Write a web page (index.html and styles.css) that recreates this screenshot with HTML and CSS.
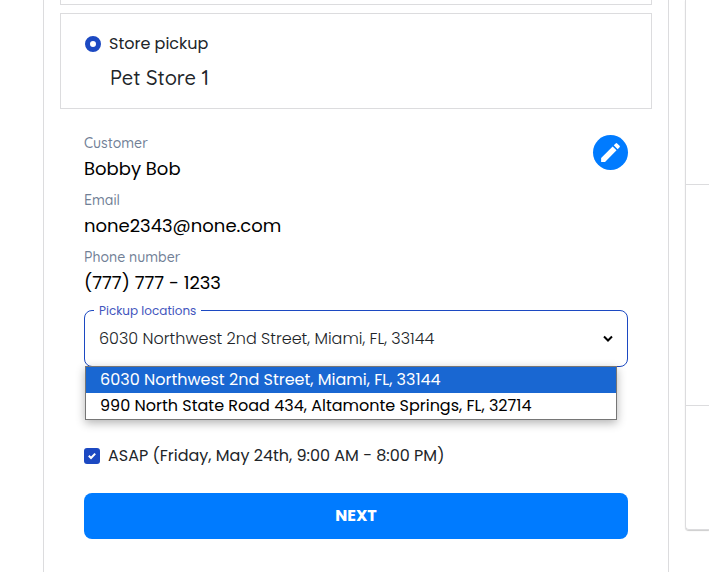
FILE: index.html
```html
<!DOCTYPE html>
<html lang="en">

<head>
    <meta charset="utf-8">
    <meta name="viewport" content="width=device-width, initial-scale=1">
    <title>Checkout</title>
    <link rel="stylesheet" href="styles.css">
</head>

<body>

    <div class="checkout">
        <main class="panel">
            <div class="method method-prev"></div>

            <section class="method">
                <label class="choice">
                    <input class="radio" type="radio" name="method" checked>
                    <span>Store pickup</span>
                </label>
                <p class="store-name">Pet Store 1</p>
            </section>

            <form class="details">
                <div class="customer">
                    <dl class="info">
                        <div class="info-row">
                            <dt>Customer</dt>
                            <dd>Bobby Bob</dd>
                        </div>
                        <div class="info-row">
                            <dt>Email</dt>
                            <dd>none2343@none.com</dd>
                        </div>
                        <div class="info-row">
                            <dt>Phone number</dt>
                            <dd>(777) 777 - 1233</dd>
                        </div>
                    </dl>
                    <button class="edit" type="button" aria-label="Edit">
                        <svg width="25" height="25" viewBox="0 0 24 24" fill="#fff">
                            <path d="M3 17.25V21h3.75L17.81 9.94l-3.75-3.75L3 17.25zM20.71 7.04a1 1 0 0 0 0-1.41l-2.34-2.34a1 1 0 0 0-1.41 0l-1.83 1.83 3.75 3.75 1.83-1.83z"/>
                        </svg>
                    </button>
                </div>

                <div class="field">
                    <label class="field-label" for="location">Pickup locations</label>
                    <select class="select" id="location">
                        <option selected>6030 Northwest 2nd Street, Miami, FL, 33144</option>
                        <option>990 North State Road 434, Altamonte Springs, FL, 32714</option>
                    </select>
                    <svg class="arrow" width="10" height="8" viewBox="0 0 10 8" fill="none" stroke="#000" stroke-width="2">
                        <path d="M1 1.5L5 5.5L9 1.5"/>
                    </svg>
                    <ul class="options" role="listbox">
                        <li class="option active" role="option" aria-selected="true">6030 Northwest 2nd Street, Miami, FL, 33144</li>
                        <li class="option" role="option">990 North State Road 434, Altamonte Springs, FL, 32714</li>
                    </ul>
                </div>

                <label class="choice asap">
                    <span class="check">
                        <input class="checkbox" type="checkbox" checked>
                        <svg class="tick" width="16" height="16" viewBox="0 0 16 16" fill="none" stroke="#fff" stroke-width="2">
                            <path d="M4.8 7.8L7 10L11.2 5.6"/>
                        </svg>
                    </span>
                    <span>ASAP (Friday, May 24th, 9:00 AM - 8:00 PM)</span>
                </label>

                <button class="next" type="submit">NEXT</button>
            </form>
        </main>

        <aside class="summary">
            <div class="summary-top"></div>
            <div class="summary-middle"></div>
            <div class="summary-bottom"></div>
        </aside>
    </div>

</body>

</html>
```

FILE: styles.css
```css
* {
    box-sizing: border-box;
}

body {
    margin: 0;
    background: #fff;
    color: #212529;
    font: 16px/24px Poppins, Inter, sans-serif;
}

.checkout {
    display: grid;
    grid-template-columns: minmax(0, 1fr) 24px;
    gap: 16px;
    min-height: 100vh;
    padding-left: 43px;
}

.panel {
    padding: 0 16px;
    border: solid #dcdcde;
    border-width: 0 1px;
}

.method {
    margin-bottom: 8px;
    padding: 18px 24px 16px;
    border: 1px solid #dcdcde;
}

.method-prev {
    padding: 4px 0 0;
    border-top: 0;
}

.choice {
    display: flex;
    align-items: center;
    gap: 8px;
}

.radio {
    appearance: none;
    width: 16px;
    height: 16px;
    margin: 0;
    border: 5px solid #1c49c2;
    border-radius: 50%;
    background: #fff;
}

.store-name {
    margin: 8px 0 0;
    padding-left: 25px;
    font: 500 20px/28px Quicksand, Lato, sans-serif;
}

.details {
    padding: 15px 24px 32px;
}

.customer {
    display: flex;
    justify-content: space-between;
    align-items: flex-start;
}

.info {
    display: grid;
    gap: 5px;
    margin: 0;
}

.info dt {
    color: #718096;
    font: 500 14px/22px Quicksand, Lato, sans-serif;
}

.info dd {
    margin: 0;
    color: #000;
    font-size: 18px;
    line-height: 30px;
}

.edit {
    display: flex;
    justify-content: center;
    align-items: center;
    width: 35px;
    height: 35px;
    margin-top: 3px;
    padding: 0;
    border: 0;
    border-radius: 50%;
    background: #007bff;
}

.field {
    position: relative;
    margin-top: 12px;
}

.field-label {
    position: absolute;
    top: -7px;
    left: 10px;
    padding: 0 5px;
    background: #fff;
    color: #4255bd;
    font-size: 12px;
    line-height: 16px;
}

.select {
    appearance: none;
    display: block;
    width: 100%;
    height: 57px;
    padding: 0 40px 0 14px;
    border: 1px solid #1c49c2;
    border-radius: 8px;
    background: #fff;
    color: #212529;
    font: 300 16px/24px Poppins, Inter, sans-serif;
}

.arrow {
    position: absolute;
    top: 25px;
    right: 15px;
    pointer-events: none;
}

.options {
    position: absolute;
    top: 56px;
    left: 1px;
    right: 11px;
    margin: 0;
    padding: 0;
    border: 1px solid #767676;
    background: #fff;
    box-shadow: 0 3px 9px rgba(0, 0, 0, 0.3);
    color: #000;
    list-style: none;
}

.option {
    padding: 0 14px;
    line-height: 26px;
}

.option.active {
    background: #1967d2;
    color: #fff;
}

.asap {
    margin-top: 77px;
}

.check {
    position: relative;
    width: 16px;
    height: 16px;
}

.checkbox {
    appearance: none;
    display: block;
    width: 16px;
    height: 16px;
    margin: 0;
    border-radius: 3px;
    background: #1c49c2;
}

.tick {
    position: absolute;
    top: 0;
    left: 0;
    pointer-events: none;
}

.next {
    width: 100%;
    height: 46px;
    margin-top: 25px;
    border: 0;
    border-radius: 8px;
    background: #007bff;
    color: #fff;
    font: 700 16px/24px Poppins, Inter, sans-serif;
}

.summary {
    align-self: start;
    border: solid #dcdcde;
    border-width: 0 0 1px 1px;
    border-radius: 0 0 0 4px;
    box-shadow: 0 1px 1px rgba(0, 0, 0, 0.2);
}

.summary-top {
    height: 185px;
    border-bottom: 1px solid #dcdcde;
}

.summary-middle {
    height: 221px;
    border-bottom: 1px solid #dcdcde;
}

.summary-bottom {
    height: 123px;
}
```
